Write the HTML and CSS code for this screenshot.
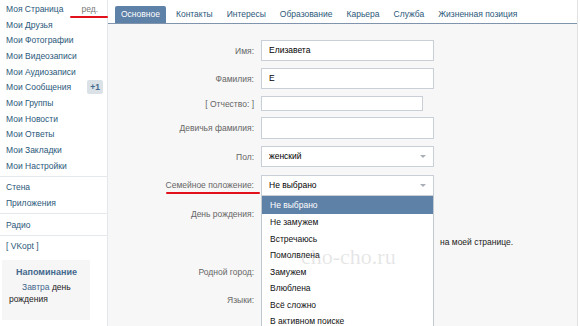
FILE: index.html
```html
<!DOCTYPE html>
<html lang="ru">
<head>
<meta charset="utf-8">
<link rel="stylesheet" href="styles.css">
</head>
<body>
<div class="page">
  <aside class="sidebar">
    <div class="nav-item first"><a>Моя Страница</a><span class="edit">ред.</span><span class="mark mark-edit"></span></div>
    <div class="nav-item"><a>Мои Друзья</a></div>
    <div class="nav-item"><a>Мои Фотографии</a></div>
    <div class="nav-item"><a>Мои Видеозаписи</a></div>
    <div class="nav-item"><a>Мои Аудиозаписи</a></div>
    <div class="nav-item"><a>Мои Сообщения</a><span class="badge">+1</span></div>
    <div class="nav-item"><a>Мои Группы</a></div>
    <div class="nav-item"><a>Мои Новости</a></div>
    <div class="nav-item"><a>Мои Ответы</a></div>
    <div class="nav-item"><a>Мои Закладки</a></div>
    <div class="nav-item"><a>Мои Настройки</a></div>
    <div class="sep"></div>
    <div class="nav-item"><a>Стена</a></div>
    <div class="nav-item"><a>Приложения</a></div>
    <div class="sep"></div>
    <div class="nav-item"><a>Радио</a></div>
    <div class="sep"></div>
    <div class="nav-item"><a>[ VKopt ]</a></div>
    <div class="reminder">
      <div class="reminder-title">Напоминание</div>
      <div class="reminder-line first-line"><span class="rem-day">Завтра</span> день</div>
      <div class="reminder-line">рождения</div>
    </div>
  </aside>
  <main class="main">
    <nav class="tabs">
      <span class="tab active">Основное</span>
      <span class="tab">Контакты</span>
      <span class="tab">Интересы</span>
      <span class="tab">Образование</span>
      <span class="tab">Карьера</span>
      <span class="tab">Служба</span>
      <span class="tab">Жизненная позиция</span>
    </nav>
    <section class="form">
      <div class="row"><label>Имя:</label><div class="input">Елизавета</div></div>
      <div class="row"><label>Фамилия:</label><div class="input">Е</div></div>
      <div class="row small"><label>[ Отчество: ]</label><div class="input short"></div></div>
      <div class="row tall"><label>Девичья фамилия:</label><div class="input"></div></div>
      <div class="row"><label>Пол:</label><div class="input select">женский<span class="arrow"></span></div></div>
      <div class="row"><label class="marked">Семейное положение:<span class="mark mark-label"></span></label>
        <div class="select-wrap">
          <div class="input select">Не выбрано<span class="arrow"></span></div>
          <ul class="dropdown">
            <li class="hl">Не выбрано</li>
            <li>Не замужем</li>
            <li>Встречаюсь</li>
            <li>Помолвлена</li>
            <li>Замужем</li>
            <li>Влюблена</li>
            <li>Всё сложно</li>
            <li>В активном поиске</li>
          </ul>
        </div>
      </div>
      <div class="row"><label>День рождения:</label><div class="input select"></div></div>
      <div class="row note"><label></label><div class="note-text">на моей странице.</div></div>
      <div class="row city"><label>Родной город:</label><div class="input"></div></div>
      <div class="row"><label>Языки:</label><div class="input"></div></div>
    </section>
    <div class="watermark">cho-cho.ru</div>
  </main>
</div>
</body>
</html>
```
FILE: styles.css
```css
* { box-sizing: border-box; margin: 0; padding: 0; }
html, body { width: 580px; height: 326px; overflow: hidden; background: #fff; }
body { font-family: "Liberation Sans", Arial, sans-serif; font-size: 8.5px; color: #000; }

.page { display: flex; height: 326px; }

.sidebar { width: 108px; flex: none; padding: 1px 0 0 6px; border-right: 1px solid #e4e8ec; }
.nav-item { position: relative; display: flex; align-items: center; height: 15.7px; color: #2b587a; }
.nav-item a { flex: 1; }
.edit { color: #777; margin-right: 9px; }
.badge { background: #dae2e8; color: #45688e; font-weight: bold; padding: 2px 3px; margin-right: 4px; border-radius: 2px; }
.sep { height: 1px; background: #e6e9ec; margin: 2px 0 3px -6px; }
.mark { position: absolute; height: 2px; background: #e2101b; border-radius: 1px; }
.mark-edit { left: 64px; top: 15px; width: 38px; }

.reminder { margin: 6px 0 0 -4px; width: 88px; height: 60px; background: #f6f6f6; padding: 7px 6px 0 7px; }
.reminder-title { text-align: center; color: #45688e; font-weight: bold; font-size: 9px; line-height: 11px; margin-bottom: 3px; }
.reminder-line { line-height: 12px; color: #222; }
.rem-day { margin-left: 13px; color: #45688e; }

.main { position: relative; flex: none; width: 470px; background: #f7f7f7; border-right: 1px solid #e2e2e2; }
.tabs { display: flex; align-items: flex-end; height: 24px; padding-left: 7px; background: #fff; border-bottom: 1px solid #8095ad; gap: 2px; }
.tab { padding: 0 6px; height: 17px; line-height: 17px; color: #2b587a; }
.tab.active { background: #5e81a8; color: #fff; border-radius: 2px 2px 0 0; margin-right: 2px; }

.form { padding-top: 16px; }
.row { display: flex; align-items: center; gap: 7px; margin-bottom: 7px; }
.row label { width: 146px; text-align: right; color: #666; flex: none; position: relative; }
.input { width: 173px; height: 21px; background: #fff; border: 1px solid #c8cfd6; padding: 0 7px; line-height: 19px; color: #000; position: relative; }
.small .input { height: 15px; width: 162px; }
.small { margin-bottom: 6px; }
.tall .input { height: 22px; }
.select .arrow { position: absolute; right: 7px; top: 8px; width: 0; height: 0; border-left: 3.5px solid transparent; border-right: 3.5px solid transparent; border-top: 3.5px solid #a8afb6; }
.select-wrap { position: relative; margin-top: 1px; }
.mark-label { right: -6px; top: 12px; width: 94px; }

.dropdown { position: absolute; left: 0; top: 21px; width: 173px; list-style: none; background: #fff; border: 1px solid #c0c8d0; border-top: none; z-index: 2; }
.dropdown li { height: 16.5px; line-height: 16.5px; padding-left: 8px; color: #111; }
.dropdown li.hl { height: 18px; line-height: 18px; background: #5e81a8; color: #fff; }

.note { margin-top: 13px; }
.note-text { margin-left: 179px; color: #222; }
.city { margin-top: 14px; }

.watermark { position: absolute; left: 193px; top: 244px; font-family: "Liberation Serif", serif; font-size: 22px; color: rgba(140, 140, 140, 0.22); z-index: 3; pointer-events: none; }
```
